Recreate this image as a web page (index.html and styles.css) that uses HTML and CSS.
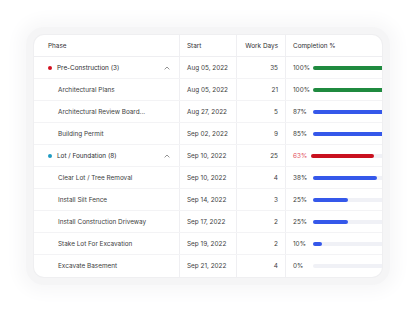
FILE: index.html
```html
<!DOCTYPE html>
<html>
<head>
<meta charset="utf-8">
<link rel="stylesheet" href="styles.css">
</head>
<body>
<div class="stage">
  <div class="card">
    <div class="row head">
      <div class="cell phase">Phase</div>
      <div class="cell start">Start</div>
      <div class="cell days">Work Days</div>
      <div class="cell comp">Completion %</div>
    </div>

    <div class="row">
      <div class="cell phase group"><span class="dot red"></span><span class="gname">Pre-Construction (3)</span><svg class="chev" viewBox="0 0 6 4" width="6" height="4"><path d="M0.6 3.4 L3 1 L5.4 3.4" fill="none" stroke="#777" stroke-width="0.8"/></svg></div>
      <div class="cell start">Aug 05, 2022</div>
      <div class="cell days">35</div>
      <div class="cell comp"><span class="pct">100%</span><span class="track"><span class="fill green" style="width:100%"></span></span></div>
    </div>
    <div class="row">
      <div class="cell phase child">Architectural Plans</div>
      <div class="cell start">Aug 05, 2022</div>
      <div class="cell days">21</div>
      <div class="cell comp"><span class="pct">100%</span><span class="track"><span class="fill green" style="width:100%"></span></span></div>
    </div>
    <div class="row">
      <div class="cell phase child">Architectural Review Board...</div>
      <div class="cell start">Aug 27, 2022</div>
      <div class="cell days">5</div>
      <div class="cell comp"><span class="pct">87%</span><span class="track"><span class="fill blue" style="width:87px"></span></span></div>
    </div>
    <div class="row">
      <div class="cell phase child">Building Permit</div>
      <div class="cell start">Sep 02, 2022</div>
      <div class="cell days">9</div>
      <div class="cell comp"><span class="pct">85%</span><span class="track"><span class="fill blue" style="width:85px"></span></span></div>
    </div>

    <div class="row">
      <div class="cell phase group"><span class="dot teal"></span><span class="gname">Lot / Foundation (8)</span><svg class="chev" viewBox="0 0 6 4" width="6" height="4"><path d="M0.6 3.4 L3 1 L5.4 3.4" fill="none" stroke="#777" stroke-width="0.8"/></svg></div>
      <div class="cell start">Sep 10, 2022</div>
      <div class="cell days">25</div>
      <div class="cell comp"><span class="pct late">63%</span><span class="track"><span class="fill redbar" style="width:63px"></span></span></div>
    </div>
    <div class="row">
      <div class="cell phase child">Clear Lot / Tree Removal</div>
      <div class="cell start">Sep 10, 2022</div>
      <div class="cell days">4</div>
      <div class="cell comp"><span class="pct">38%</span><span class="track"><span class="fill blue" style="width:64px"></span></span></div>
    </div>
    <div class="row">
      <div class="cell phase child">Install Silt Fence</div>
      <div class="cell start">Sep 14, 2022</div>
      <div class="cell days">3</div>
      <div class="cell comp"><span class="pct">25%</span><span class="track"><span class="fill blue" style="width:35px"></span></span></div>
    </div>
    <div class="row">
      <div class="cell phase child">Install Construction Driveway</div>
      <div class="cell start">Sep 17, 2022</div>
      <div class="cell days">2</div>
      <div class="cell comp"><span class="pct">25%</span><span class="track"><span class="fill blue" style="width:35px"></span></span></div>
    </div>
    <div class="row">
      <div class="cell phase child">Stake Lot For Excavation</div>
      <div class="cell start">Sep 19, 2022</div>
      <div class="cell days">2</div>
      <div class="cell comp"><span class="pct">10%</span><span class="track"><span class="fill blue" style="width:9px"></span></span></div>
    </div>
    <div class="row last">
      <div class="cell phase child">Excavate Basement</div>
      <div class="cell start">Sep 21, 2022</div>
      <div class="cell days">4</div>
      <div class="cell comp"><span class="pct">0%</span><span class="track"></span></div>
    </div>
  </div>
</div>
</body>
</html>
```

FILE: styles.css
```css
* { box-sizing: border-box; }
html, body { margin: 0; padding: 0; background: #ffffff; }
body {
  width: 420px;
  height: 317px;
  overflow: hidden;
  font-family: Inter, "Noto Sans", sans-serif;
  font-size: 6.4px;
  color: #3d3d40;
}
.stage {
  padding: 35px 0 0 34px;
}
.card {
  width: 348px;
  background: #fff;
  border-radius: 10px;
  overflow: hidden;
  box-shadow: 0 0 0 1px #efeff1, 0 0 0 8px #f5f5f6, 0 0 16px 16px #f8f8f9;
}
.row {
  display: grid;
  grid-template-columns: 146px 57px 49px 96px;
  height: 22px;
  border-bottom: 1px solid #f3f3f5;
}
.row.last { border-bottom: none; }
.row.head { border-bottom-color: #eeeef1; }
.cell {
  display: flex;
  align-items: center;
  white-space: nowrap;
  overflow: hidden;
  border-right: 1px solid #efeff2;
}
.cell.comp { border-right: none; overflow: visible; }
.phase { padding-left: 14px; }
.phase.child { padding-left: 24px; }
.start { padding-left: 7px; }
.days { justify-content: flex-end; padding-right: 7px; }
.comp { padding-left: 7px; }
.head .cell { color: #2f2f33; }
.group { color: #2c2c30; }
.dot {
  width: 4px;
  height: 4px;
  border-radius: 50%;
  margin-right: 5px;
  flex: none;
}
.dot.red { background: #d2101f; }
.dot.teal { background: #1f9bc2; }
.gname { flex: 1; }
.chev { margin-right: 9px; flex: none; }
.pct { width: 20px; flex: none; }
.pct.late { color: #e2505e; width: 18px; }
.track {
  display: block;
  width: 100px;
  height: 4px;
  border-radius: 2px;
  background: #f0f1f6;
  flex: none;
}
.fill {
  display: block;
  height: 4px;
  border-radius: 2px;
}
.fill.green { background: #1f8a3f; }
.fill.blue { background: #3558ea; }
.fill.redbar { background: #c9111f; }
```
